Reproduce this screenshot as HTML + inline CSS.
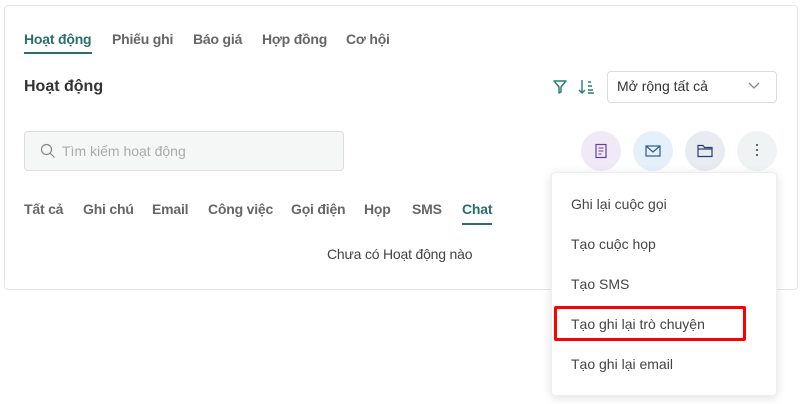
<!DOCTYPE html>
<html><head><meta charset="utf-8"><style>
body{margin:0;width:802px;height:404px;background:#fff;font-family:"Liberation Sans","DejaVu Sans",sans-serif;position:relative;overflow:hidden;color:#444}
.a{position:absolute;white-space:nowrap}
.card{position:absolute;left:4px;top:5px;width:792px;height:283px;border:1px solid #e6e6e6;border-radius:4px;background:#fff}
.tab{font-size:14px;font-weight:bold;color:#666;top:31px;letter-spacing:-0.2px}
.ft{font-size:14px;font-weight:bold;color:#666;top:201px;letter-spacing:-0.2px}
.circ{position:absolute;top:131px;width:40px;height:40px;border-radius:50%}
.mi{font-size:14px;color:#444;left:571px}
</style></head><body>
<div class="card"></div>
<div class="a tab" style="left:24px;color:#2b6e6e">Hoạt động</div>
<div class="a" style="left:24px;top:52px;width:68px;height:2px;background:#2b6e6e"></div>
<div class="a tab" style="left:112px">Phiếu ghi</div>
<div class="a tab" style="left:193px">Báo giá</div>
<div class="a tab" style="left:262px">Hợp đồng</div>
<div class="a tab" style="left:346px">Cơ hội</div>
<div class="a" style="left:24px;top:78px;font-size:16px;font-weight:bold;color:#333">Hoạt động</div>
<svg class="a" style="left:552px;top:79px" width="16" height="16" viewBox="0 0 16 16"><path d="M2 2h12l-5 6v5l-2 1V8z" fill="none" stroke="#2b7e7e" stroke-width="1.5" stroke-linejoin="round"/></svg>
<svg class="a" style="left:578px;top:78px" width="18" height="18" viewBox="0 0 18 18"><path d="M4 2v13M1 12l3 3 3-3M10 4h3M10 8h4M10 12h5M10 15h6" fill="none" stroke="#2b7e7e" stroke-width="1.4"/></svg>
<div class="a" style="left:607px;top:71px;width:168px;height:30px;border:1px solid #ddd;border-radius:4px"></div>
<div class="a" style="left:617px;top:78px;font-size:14px;color:#333">Mở rộng tất cả</div>
<svg class="a" style="left:748px;top:82px" width="12" height="8" viewBox="0 0 12 8"><path d="M1 1l5 5 5-5" fill="none" stroke="#888" stroke-width="1.3"/></svg>
<div class="a" style="left:24px;top:131px;width:318px;height:38px;border:1px solid #ddd;border-radius:4px;background:#f5f6f6"></div>
<svg class="a" style="left:40px;top:143px" width="16" height="16" viewBox="0 0 16 16"><circle cx="6.5" cy="6.5" r="5" fill="none" stroke="#888" stroke-width="1.2"/><path d="M10 10l4.5 4.5" stroke="#888" stroke-width="1.2"/></svg>
<div class="a" style="left:62px;top:143px;font-size:14px;color:#aaa">Tìm kiếm hoạt động</div>
<div class="circ" style="left:581px;background:#f0eaf7"></div>
<svg class="a" style="left:594px;top:143px" width="14" height="16" viewBox="0 0 14 16"><rect x="2" y="1.5" width="10" height="13" fill="none" stroke="#6a3d9a" stroke-width="1.2"/><path d="M4.5 5h5M4.5 8h5M4.5 11h3" stroke="#6a3d9a" stroke-width="1.1"/></svg>
<div class="circ" style="left:633px;background:#e6f0fa"></div>
<svg class="a" style="left:645px;top:145px" width="16" height="12" viewBox="0 0 16 12"><rect x="1" y="1" width="14" height="10" fill="none" stroke="#2a5a90" stroke-width="1.2"/><path d="M1 1l7 6 7-6" fill="none" stroke="#2a5a90" stroke-width="1.2"/></svg>
<div class="circ" style="left:685px;background:#e9ebf2"></div>
<svg class="a" style="left:697px;top:144px" width="16" height="14" viewBox="0 0 16 14"><path d="M1 1.5h5l1.5 2H15v9H1z M1 5h14" fill="none" stroke="#2a3f70" stroke-width="1.2"/></svg>
<div class="circ" style="left:737px;background:#f0f3f3"></div>
<div class="a" style="left:756px;top:144px;width:2px;height:2px;background:#666;box-shadow:0 5px #666,0 10px #666"></div>
<div class="a ft" style="left:24px">Tất cả</div>
<div class="a ft" style="left:83px">Ghi chú</div>
<div class="a ft" style="left:152px">Email</div>
<div class="a ft" style="left:208px">Công việc</div>
<div class="a ft" style="left:291px">Gọi điện</div>
<div class="a ft" style="left:364px">Họp</div>
<div class="a ft" style="left:412px">SMS</div>
<div class="a ft" style="left:462px;color:#2b6e6e">Chat</div>
<div class="a" style="left:462px;top:223px;width:30px;height:2px;background:#2b6e6e"></div>
<div class="a" style="left:327px;top:246px;font-size:14px;color:#444;letter-spacing:-0.2px">Chưa có Hoạt động nào</div>
<div class="a" style="left:551px;top:172px;width:224px;height:222px;background:#fff;border:1px solid #eee;border-radius:4px;box-shadow:0 2px 10px rgba(0,0,0,.12)"></div>
<div class="a mi" style="top:196px">Ghi lại cuộc gọi</div>
<div class="a mi" style="top:236px">Tạo cuộc họp</div>
<div class="a mi" style="top:276px">Tạo SMS</div>
<div class="a mi" style="top:316px">Tạo ghi lại trò chuyện</div>
<div class="a mi" style="top:356px">Tạo ghi lại email</div>
<div class="a" style="left:554px;top:306px;width:186px;height:29px;border:3px solid #f00;border-radius:2px"></div>
</body></html>
